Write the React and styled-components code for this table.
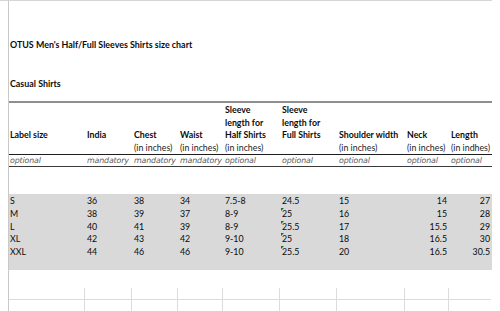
import styled, { createGlobalStyle } from "styled-components";

const GlobalStyle = createGlobalStyle`
  html, body {
    margin: 0;
    padding: 0;
    background: #ffffff;
  }
  body {
    font-family: Lato, "Open Sans", sans-serif;
    color: #111111;
  }
`;

const COLS = "76px 47px 46px 45px 57px 57px 68px 44px 42px";

const Style = {
  Page: styled.div`
    width: 492px;
    border-top: 1px solid #d6d6d6;
  `,
  Sheet: styled.div`
    width: 483px;
    height: 310px;
    margin-left: 8px;
    border-left: 1px solid #c9c9c9;
    overflow: hidden;
  `,
  Title: styled.div`
    padding-top: 38px;
    padding-left: 1px;
    font-size: 8.9px;
    font-weight: bold;
    line-height: 12px;
    color: #0c0c0c;
  `,
  Subtitle: styled.div`
    margin-top: 27px;
    padding-left: 1px;
    font-size: 8.9px;
    font-weight: bold;
    line-height: 12px;
    color: #0c0c0c;
  `,
  Rule: styled.div`
    margin-top: ${({ gap }) => gap || 0}px;
    height: ${({ thick }) => (thick ? "2px" : "1px")};
    background: ${({ color }) => color};
  `,
  Grid: styled.div`
    display: grid;
    grid-template-columns: ${COLS};
  `,
  HeadCell: styled.div`
    display: flex;
    flex-direction: column;
    padding: 1px 0 0 ${({ first }) => (first ? "1px" : "2px")};
    font-size: 8.8px;
    line-height: 12.5px;
    white-space: nowrap;
  `,
  HeadLine: styled.div`
    height: 12.5px;
    font-weight: ${({ sub }) => (sub ? "normal" : "bold")};
    color: ${({ sub }) => (sub ? "#222222" : "#0c0c0c")};
  `,
  NoteCell: styled.div`
    padding: 1px 0 0 ${({ first }) => (first ? "1px" : "2px")};
    font-size: 7.9px;
    line-height: 10px;
    font-style: italic;
    color: #5a5a5a;
    font-family: "DejaVu Sans", sans-serif;
    letter-spacing: -0.15px;
    white-space: nowrap;
  `,
  Band: styled.div`
    margin-top: 27px;
    padding: 1px 0 11px;
    background: #d9d9d9;
  `,
  Cell: styled.div`
    position: relative;
    padding: 0 ${({ edge }) => (edge ? "1px" : "2px")} 0 ${({ first }) => (first ? "1px" : "2px")};
    font-size: 8.8px;
    line-height: 12.75px;
    text-align: ${({ right }) => (right ? "right" : "left")};
    white-space: nowrap;
    color: #0a0a0a;
    ${({ flag }) =>
      flag
        ? `
      &::before {
        content: "";
        position: absolute;
        left: 1px;
        top: 0;
        width: 0;
        height: 0;
        border-top: 3px solid #1e6b2e;
        border-right: 3px solid transparent;
      }
    `
        : ""}
  `,
  Lines: styled.div`
    margin-top: 18px;
    display: grid;
    grid-template-columns: ${COLS};
  `,
  LineCell: styled.div`
    height: 12px;
    border-right: ${({ edge }) => (edge ? "none" : "1px solid #dcdcdc")};
    border-bottom: ${({ top }) => (top ? "1px solid #dcdcdc" : "none")};
    box-sizing: border-box;
  `,
};

const header = [
  ["", "", "Label size", ""],
  ["", "", "India", ""],
  ["", "", "Chest", "(in inches)"],
  ["", "", "Waist", "(in inches)"],
  ["Sleeve", "length for", "Half Shirts", "(in inches)"],
  ["Sleeve", "length for", "Full Shirts", ""],
  ["", "", "Shoulder width", "(in inches)"],
  ["", "", "Neck", "(in inches)"],
  ["", "", "Length", "(in indhes)"],
];

const notes = [
  "optional",
  "mandatory",
  "mandatory",
  "mandatory",
  "optional",
  "optional",
  "optional",
  "optional",
  "optional",
];

const rows = [
  ["S", "36", "38", "34", "7.5-8", "24.5", "15", "14", "27"],
  ["M", "38", "39", "37", "8-9", "25", "16", "15", "28"],
  ["L", "40", "41", "39", "8-9", "25.5", "17", "15.5", "29"],
  ["XL", "42", "43", "42", "9-10", "25", "18", "16.5", "30"],
  ["XXL", "44", "46", "46", "9-10", "25.5", "20", "16.5", "30.5"],
];

function App() {
  return (
    <>
      <GlobalStyle />
      <Style.Page>
        <Style.Sheet>
          <Style.Title>OTUS Men's Half/Full Sleeves Shirts size chart</Style.Title>
          <Style.Subtitle>Casual Shirts</Style.Subtitle>
          <Style.Rule thick gap={11} color="#8f8f8f" />

          <Style.Grid>
            {header.map((col, i) => (
              <Style.HeadCell key={i} first={i === 0}>
                {col.map((line, j) => (
                  <Style.HeadLine key={j} sub={j === 3}>
                    {line}
                  </Style.HeadLine>
                ))}
              </Style.HeadCell>
            ))}
          </Style.Grid>
          <Style.Rule color="#1e1e1e" />

          <Style.Grid>
            {notes.map((note, i) => (
              <Style.NoteCell key={i} first={i === 0}>
                {note}
              </Style.NoteCell>
            ))}
          </Style.Grid>
          <Style.Rule color="#3a3a3a" />

          <Style.Band>
            <Style.Grid>
              {rows.map((row, r) =>
                row.map((val, i) => (
                  <Style.Cell
                    key={r + "-" + i}
                    first={i === 0}
                    right={i >= 7}
                    edge={i === 8}
                    flag={i === 5 && r > 0}
                  >
                    {val}
                  </Style.Cell>
                ))
              )}
            </Style.Grid>
          </Style.Band>

          <Style.Lines>
            {header.map((_, i) => (
              <Style.LineCell key={"a" + i} top edge={i === 8} />
            ))}
            {header.map((_, i) => (
              <Style.LineCell key={"b" + i} edge={i === 8} />
            ))}
          </Style.Lines>
        </Style.Sheet>
      </Style.Page>
    </>
  );
}

export default App;
